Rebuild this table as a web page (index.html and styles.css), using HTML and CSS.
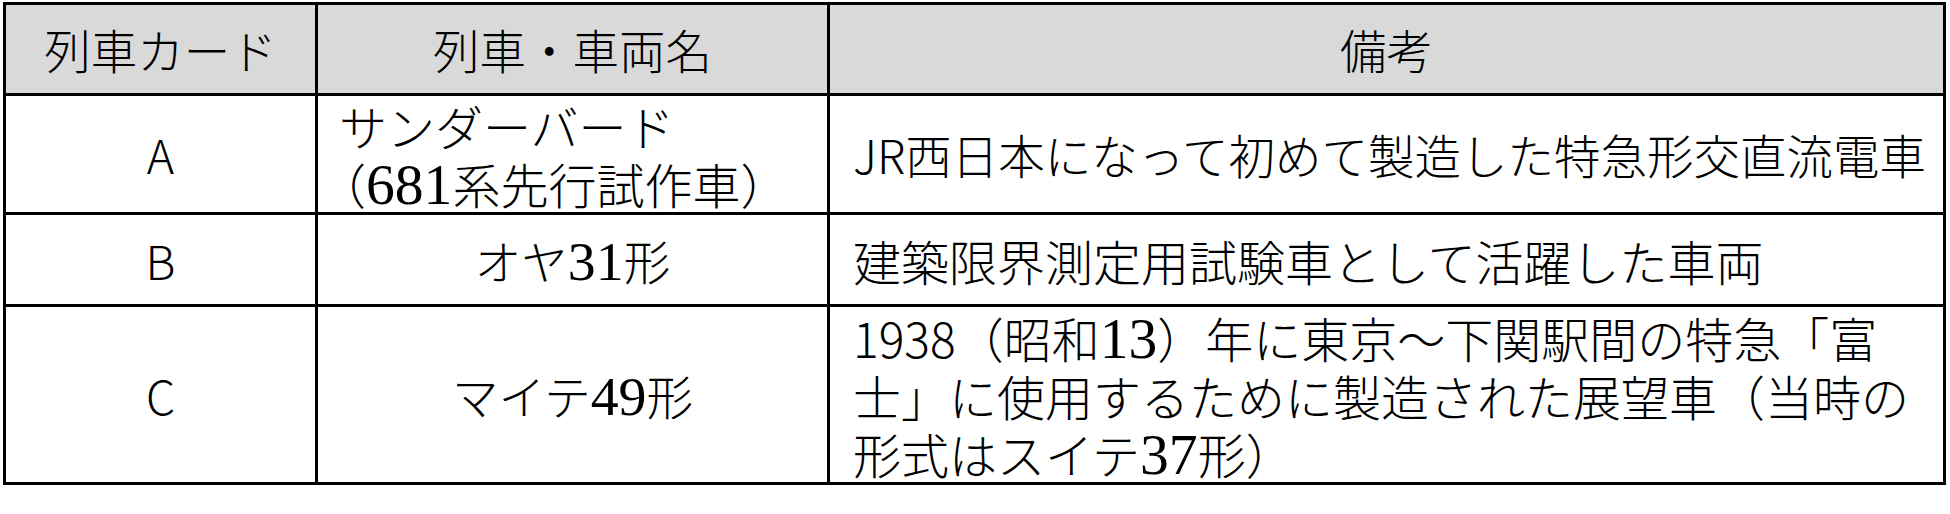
FILE: index.html
```html
<!DOCTYPE html>
<html lang="ja">
<head>
<meta charset="utf-8">
<title>列車カード</title>
<link rel="stylesheet" href="styles.css">
</head>
<body>
<div class="page">
<table class="cards">
  <colgroup>
    <col class="col-card">
    <col class="col-name">
    <col class="col-note">
  </colgroup>
  <thead>
    <tr class="row-head">
      <th class="cell">列車カード</th>
      <th class="cell">列車・車両名</th>
      <th class="cell">備考</th>
    </tr>
  </thead>
  <tbody>
    <tr class="row-a">
      <td class="cell card">A</td>
      <td class="cell name name-left big">サンダーバード<br>（<span class="num">681</span>系先行試作車）</td>
      <td class="cell note">JR西日本になって初めて製造した特急形交直流電車</td>
    </tr>
    <tr class="row-b">
      <td class="cell card">B</td>
      <td class="cell name">オヤ<span class="num">31</span>形</td>
      <td class="cell note big">建築限界測定用試験車として活躍した車両</td>
    </tr>
    <tr class="row-c">
      <td class="cell card">C</td>
      <td class="cell name">マイテ<span class="num">49</span>形</td>
      <td class="cell note big">1938（昭和<span class="num">13</span>）年に東京～下関駅間の特急「富<br>士」に使用するために製造された展望車（当時の<br>形式はスイテ<span class="num">37</span>形）</td>
    </tr>
  </tbody>
</table>
</div>
</body>
</html>
```

FILE: styles.css
```css
html, body {
  margin: 0;
  padding: 0;
  background: #ffffff;
}

.page {
  padding: 2px 0 0 3px;
}

.cards {
  border-collapse: collapse;
  table-layout: fixed;
  width: 1943px;
  font-family: "Noto Sans CJK JP", "Noto Sans", sans-serif;
  font-weight: 300;
  font-size: 46.5px;
  line-height: 58px;
  color: #000;
}

.col-card { width: 312px; }
.col-name { width: 512px; }
.col-note { width: 1116px; }

.cell {
  border: 3px solid #000;
  padding: 0;
  vertical-align: middle;
  white-space: nowrap;
  font-weight: 300;
}

.row-head .cell {
  background: #d9d9d9;
  text-align: center;
  height: 88px;
}

.row-a .cell { height: 116px; }
.row-b .cell { height: 89px; }
.row-c .cell { height: 175px; }

.cell.card {
  text-align: center;
}

.cell.name {
  text-align: center;
}

.cell.name-left {
  text-align: left;
  text-indent: 21px;
}

.cell.note {
  text-align: left;
  padding-left: 23px;
}

.cell.big {
  font-size: 48px;
}

.num {
  font-family: "Liberation Serif", serif;
  font-weight: 400;
  font-size: 1.2em;
  line-height: 0.9;
}
```
